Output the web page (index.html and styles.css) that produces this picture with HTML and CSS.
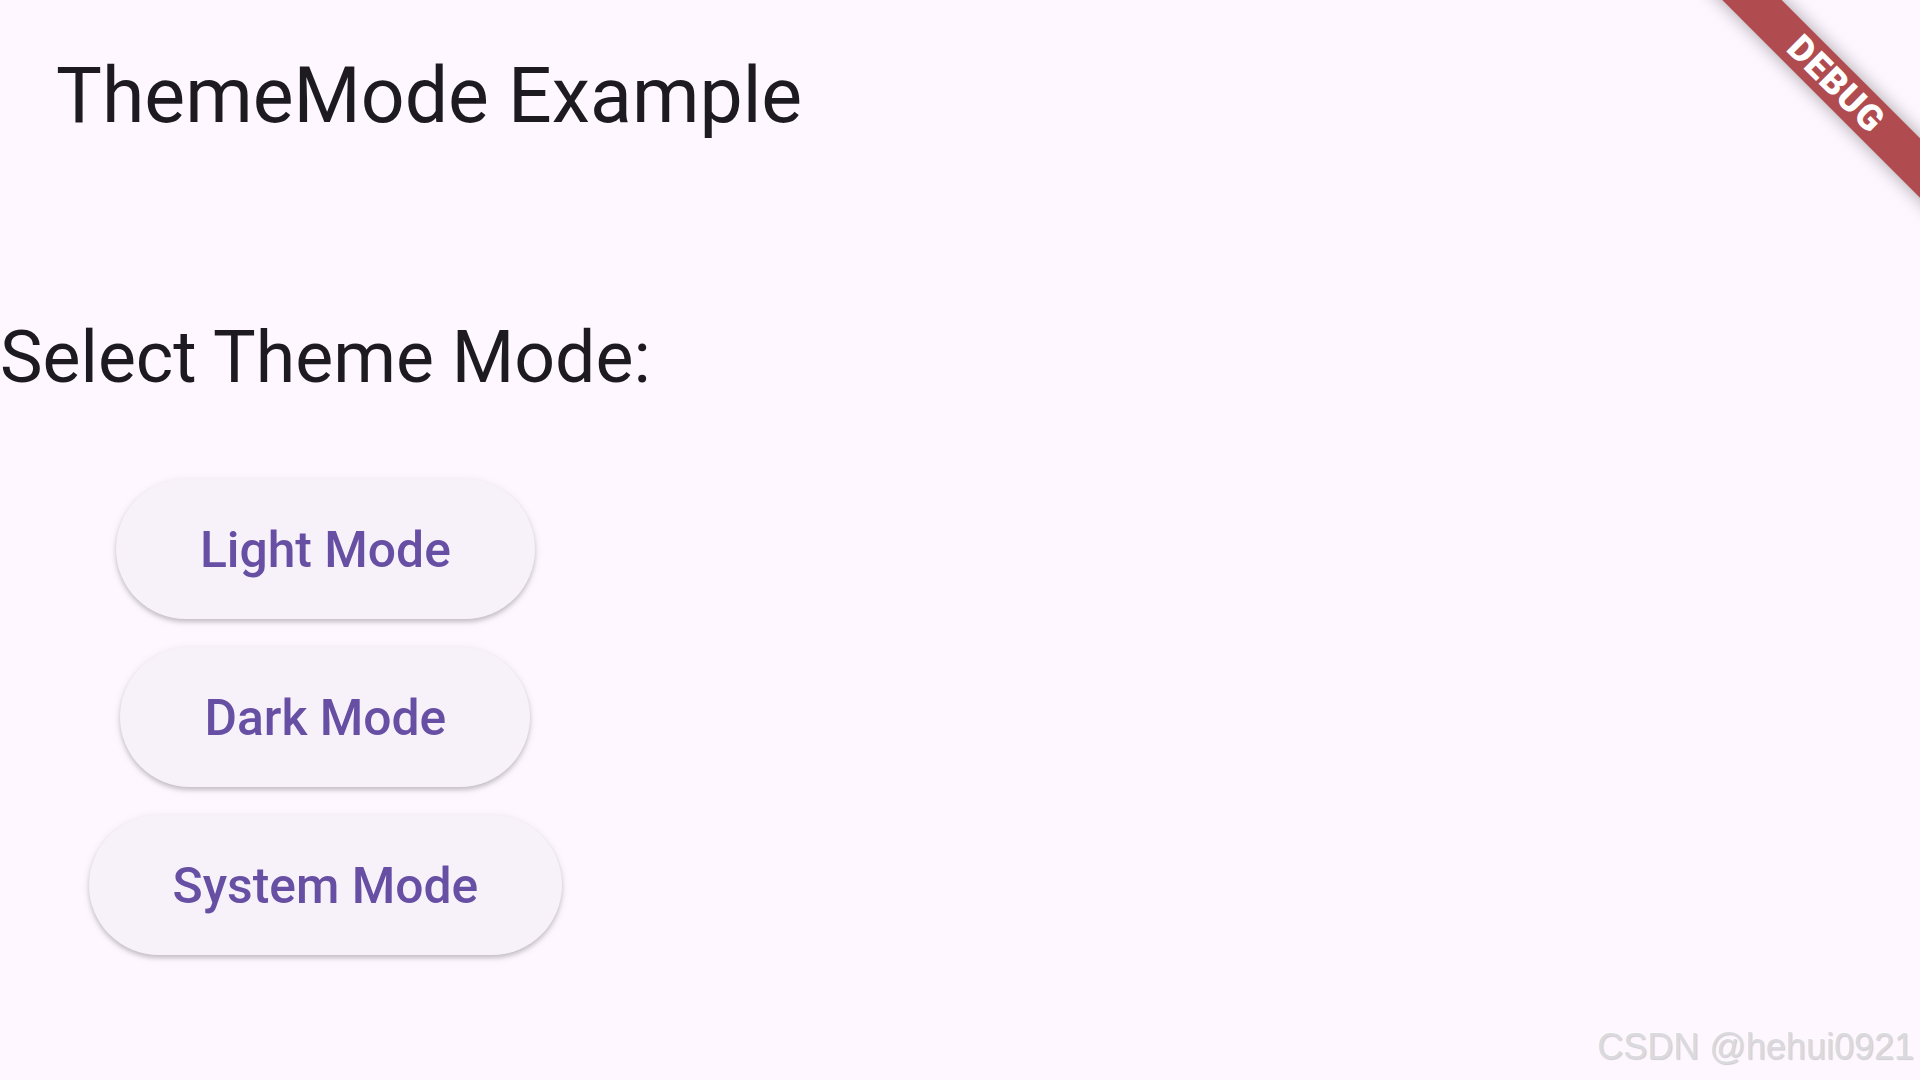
FILE: index.html
```html
<!DOCTYPE html>
<html lang="en">
<head>
<meta charset="utf-8">
<title>ThemeMode Example</title>
<link rel="stylesheet" href="styles.css">
</head>
<body>
<div class="screen">
  <header class="app-bar">
    <h1 class="app-title">ThemeMode Example</h1>
  </header>
  <main class="content">
    <div class="column">
      <h2 class="label">Select Theme Mode:</h2>
      <div class="buttons">
        <button class="btn" type="button">Light Mode</button>
        <button class="btn" type="button">Dark Mode</button>
        <button class="btn" type="button">System Mode</button>
      </div>
    </div>
  </main>
  <div class="debug-banner"><span>DEBUG</span></div>
  <div class="watermark">CSDN @hehui0921</div>
</div>
</body>
</html>
```
FILE: styles.css
```css
html, body {
  margin: 0;
  padding: 0;
  width: 1920px;
  height: 1080px;
  overflow: hidden;
  background: #FEF7FF;
}

.screen {
  position: relative;
  width: 1920px;
  height: 1080px;
  overflow: hidden;
  background: #FEF7FF;
  font-family: Roboto, "Noto Sans", sans-serif;
  color: #1D1B20;
}

.app-bar {
  height: 192px;
  display: flex;
  align-items: center;
  padding-left: 56px;
}

.app-title {
  margin: 0;
  font-size: 77px;
  font-weight: 400;
  line-height: normal;
  color: #1D1B20;
}

.content {
  padding-top: 124px;
}

.column {
  display: flex;
  flex-direction: column;
  align-items: center;
  width: max-content;
}

.label {
  margin: 0;
  font-size: 71.6px;
  font-weight: 400;
  line-height: normal;
  color: #1D1B20;
}

.buttons {
  display: flex;
  flex-direction: column;
  align-items: center;
  gap: 28px;
  margin-top: 80px;
}

.btn {
  box-sizing: border-box;
  height: 140px;
  padding: 4px 84px 0;
  border: none;
  border-radius: 70px;
  background: #F7F2FA;
  color: #6750A4;
  font-family: Roboto, "Noto Sans", sans-serif;
  font-size: 49.8px;
  font-weight: 500;
  line-height: 1;
  box-shadow: 0 3px 4px rgba(0, 0, 0, 0.18), 0 2px 9px 1px rgba(0, 0, 0, 0.07);
  cursor: pointer;
}

.debug-banner {
  position: absolute;
  left: 1626px;
  top: 63px;
  width: 420px;
  height: 42px;
  transform: rotate(45deg);
  background: #B04C50;
  box-shadow: 0 0 18px rgba(0, 0, 0, 0.35);
  display: flex;
  align-items: center;
  justify-content: center;
}

.debug-banner span {
  color: #FFFFFF;
  font-family: Roboto, "Noto Sans", sans-serif;
  font-weight: 900;
  font-size: 36px;
  line-height: 1;
  letter-spacing: 1px;
}

.watermark {
  position: absolute;
  right: 6px;
  bottom: 12px;
  font-family: "Liberation Sans", Arial, sans-serif;
  font-size: 36px;
  color: #DADADE;
  text-shadow: 1px 1px 1px rgba(0, 0, 0, 0.18), -1px -1px 0 rgba(255, 255, 255, 0.6);
  white-space: nowrap;
}
```
